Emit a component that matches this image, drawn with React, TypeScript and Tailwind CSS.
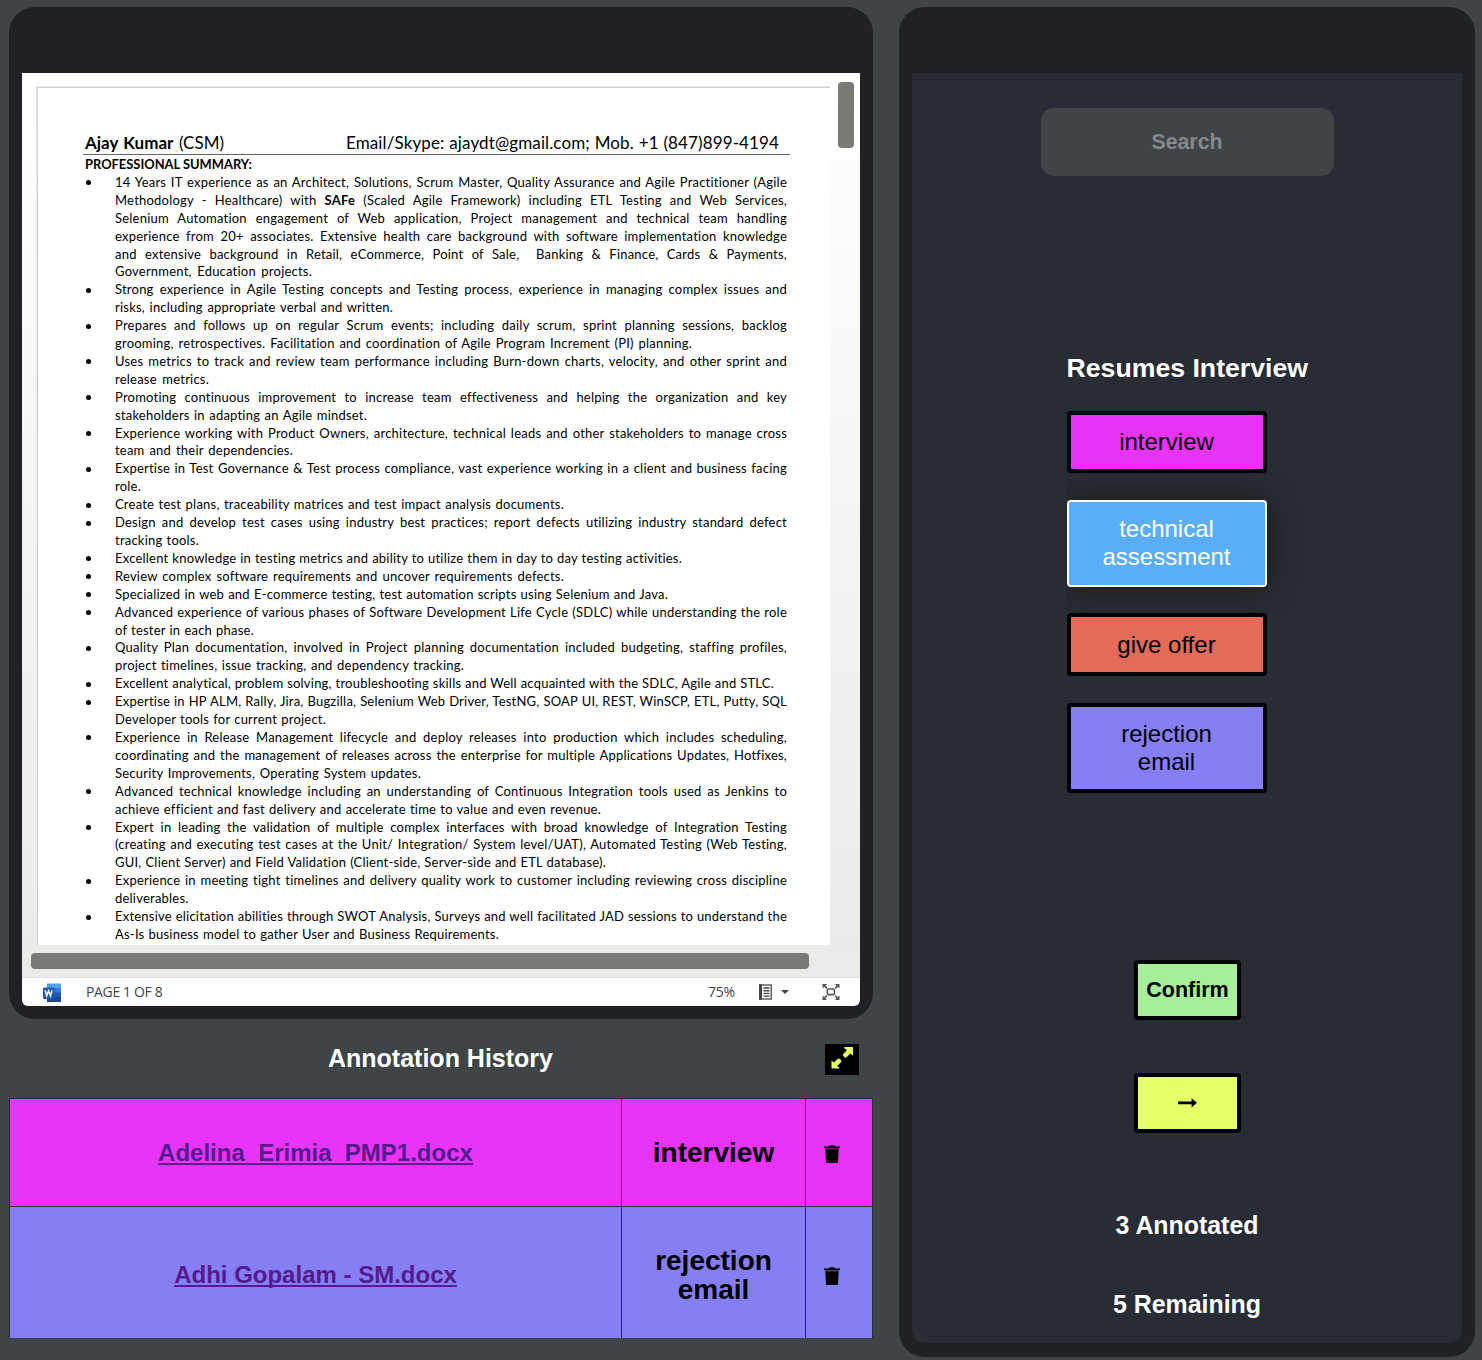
import React from "react";

type Line = { text: React.ReactNode; width?: number; bullet?: boolean };

const lines: Line[] = [
  { text: "14 Years IT experience as an Architect, Solutions, Scrum Master, Quality Assurance and Agile Practitioner (Agile", bullet: true },
  { text: <>Methodology - Healthcare) with <b>SAFe</b> (Scaled Agile Framework) including ETL Testing and Web Services,</> },
  { text: "Selenium Automation engagement of Web application, Project management and technical team handling" },
  { text: "experience from 20+ associates. Extensive health care background with software implementation knowledge" },
  { text: "and extensive background in Retail, eCommerce, Point of Sale, \u00a0Banking & Finance, Cards & Payments," },
  { text: "Government, Education projects.", width: 197 },
  { text: "Strong experience in Agile Testing concepts and Testing process, experience in managing complex issues and", bullet: true },
  { text: "risks, including appropriate verbal and written.", width: 278 },
  { text: "Prepares and follows up on regular Scrum events; including daily scrum, sprint planning sessions, backlog", bullet: true },
  { text: "grooming, retrospectives. Facilitation and coordination of Agile Program Increment (PI) planning.", width: 577 },
  { text: "Uses metrics to track and review team performance including Burn-down charts, velocity, and other sprint and", bullet: true },
  { text: "release metrics.", width: 94 },
  { text: "Promoting continuous improvement to increase team effectiveness and helping the organization and key", bullet: true },
  { text: "stakeholders in adapting an Agile mindset.", width: 252 },
  { text: "Experience working with Product Owners, architecture, technical leads and other stakeholders to manage cross", bullet: true },
  { text: "team and their dependencies.", width: 178 },
  { text: "Expertise in Test Governance & Test process compliance, vast experience working in a client and business facing", bullet: true },
  { text: "role.", width: 26 },
  { text: "Create test plans, traceability matrices and test impact analysis documents.", width: 449, bullet: true },
  { text: "Design and develop test cases using industry best practices; report defects utilizing industry standard defect", bullet: true },
  { text: "tracking tools.", width: 84 },
  { text: "Excellent knowledge in testing metrics and ability to utilize them in day to day testing activities.", width: 567, bullet: true },
  { text: "Review complex software requirements and uncover requirements defects.", width: 449, bullet: true },
  { text: "Specialized in web and E-commerce testing, test automation scripts using Selenium and Java.", width: 553, bullet: true },
  { text: "Advanced experience of various phases of Software Development Life Cycle (SDLC) while understanding the role", bullet: true },
  { text: "of tester in each phase.", width: 139 },
  { text: "Quality Plan documentation, involved in Project planning documentation included budgeting, staffing profiles,", bullet: true },
  { text: "project timelines, issue tracking, and dependency tracking.", width: 349 },
  { text: "Excellent analytical, problem solving, troubleshooting skills and Well acquainted with the SDLC, Agile and STLC.", width: 659, bullet: true },
  { text: "Expertise in HP ALM, Rally, Jira, Bugzilla, Selenium Web Driver, TestNG, SOAP UI, REST, WinSCP, ETL, Putty, SQL", bullet: true },
  { text: "Developer tools for current project.", width: 211 },
  { text: "Experience in Release Management lifecycle and deploy releases into production which includes scheduling,", bullet: true },
  { text: "coordinating and the management of releases across the enterprise for multiple Applications Updates, Hotfixes," },
  { text: "Security Improvements, Operating System updates.", width: 306 },
  { text: "Advanced technical knowledge including an understanding of Continuous Integration tools used as Jenkins to", bullet: true },
  { text: "achieve efficient and fast delivery and accelerate time to value and even revenue.", width: 486 },
  { text: "Expert in leading the validation of multiple complex interfaces with broad knowledge of Integration Testing", bullet: true },
  { text: "(creating and executing test cases at the Unit/ Integration/ System level/UAT), Automated Testing (Web Testing," },
  { text: "GUI, Client Server) and Field Validation (Client-side, Server-side and ETL database).", width: 491 },
  { text: "Experience in meeting tight timelines and delivery quality work to customer including reviewing cross discipline", bullet: true },
  { text: "deliverables.", width: 102 },
  { text: "Extensive elicitation abilities through SWOT Analysis, Surveys and well facilitated JAD sessions to understand the", bullet: true },
  { text: "As-Is business model to gather User and Business Requirements.", width: 384 },
];

function TrashIcon() {
  return (
    <svg width="16" height="18" viewBox="0 0 16 18">
      <path d="M0 1.4h4.6L6 .2h4l1.4 1.2H16v1.5H0z" fill="#000" />
      <path d="M1 2.9h14v2H1z" fill="#000" fillOpacity="0.55" />
      <path d="M1.3 4.6h13.4l-.7 12.2q-.1 1.2-1.3 1.2H3.3q-1.2 0-1.3-1.2z" fill="#000" />
    </svg>
  );
}

function WordIcon() {
  return (
    <svg width="18" height="19" viewBox="0 0 18 19">
      <path d="M4 .5h14v5H4z" fill="#4fa3e8" />
      <path d="M4 5h14v5H4z" fill="#3a78d0" />
      <path d="M4 9.5h14v5H4z" fill="#2558b5" />
      <path d="M4 14h14v5H4z" fill="#1b4495" />
      <rect x="0" y="4.5" width="11.5" height="11.5" rx="1" fill="#2359b8" />
      <path d="M2.2 7.4l1.5 5.4 1.9-5 1.9 5 1.5-5.4" fill="none" stroke="#fff" strokeWidth="1.5" />
    </svg>
  );
}

function LayoutIcon() {
  return (
    <svg width="13" height="16" viewBox="0 0 13 16">
      <rect x=".75" y="1" width="11.5" height="14" fill="#fff" stroke="#555" strokeWidth="1.4" />
      <path d="M0 .4h3v15.2H0z" fill="#444" />
      <path d="M4.5 4h6M4.5 6.7h6M4.5 9.4h6M4.5 12.1h6" stroke="#444" strokeWidth="1.4" />
    </svg>
  );
}

function FitIcon() {
  return (
    <svg width="18" height="16" viewBox="0 0 18 16" fill="none" stroke="#555" strokeWidth="1.6">
      <rect x="5.4" y="5" width="7" height="5.6" rx="1" />
      <path d="M1.5 1.2L5 4.4M16.5 1.2L13 4.4M1.5 14.8L5 11.6M16.5 14.8L13 11.6" />
      <path d="M.5 0h4.6L.5 4.6zM17.5 0h-4.6l4.6 4.6zM.5 16h4.6L.5 11.4zM17.5 16h-4.6l4.6-4.6z" fill="#555" stroke="none" />
    </svg>
  );
}

function Viewer() {
  return (
    <div className="flex h-[933px] w-[838px] flex-col overflow-hidden rounded-b-md bg-white">
      <div className="flex h-[904px] flex-col bg-linear-to-b from-white to-[#ebeae8]">
        <div className="flex h-[872px] justify-between pl-[14px] pr-[6px]">
          <div className="mt-[13px] h-[859px] w-[794px] overflow-hidden border-l border-t border-[#ebebec] bg-white">
            <div className="h-full border-l border-t border-[#cfcfd2] pl-[45px] pt-[43px] font-[Lato,sans-serif] text-black [font-variant-ligatures:none]">
              <div className="flex h-[24px] w-[707px] items-center justify-between border-b border-[#666] pl-[2px] pr-[11px] text-[17px]">
                <div className="w-[139px] whitespace-nowrap [text-align-last:justify]">
                  <b>Ajay Kumar</b> (CSM)
                </div>
                <div className="w-[433px] tracking-[0.12px] whitespace-nowrap [text-align-last:justify]">
                  Email/Skype: ajaydt@gmail.com; Mob. +1 (847)899-4194
                </div>
              </div>
              <div className="ml-[2px] h-[18.9px] w-[166px] whitespace-nowrap text-[12.9px] leading-[18.4px] font-bold [text-align-last:justify]">
                PROFESSIONAL SUMMARY:
              </div>
              {lines.map((line, i) => (
                <div key={i} className="flex h-[17.92px] items-center pl-[3px] text-[13px] leading-[17.92px] tracking-[0.22px]">
                  <div className="w-[29px] shrink-0">
                    {line.bullet && <div className="size-[5px] rounded-full bg-black" />}
                  </div>
                  <div
                    className="shrink-0 whitespace-nowrap [text-align-last:justify]"
                    style={{ width: line.width ?? 672 }}
                  >
                    {line.text}
                  </div>
                </div>
              ))}
            </div>
          </div>
          <div className="mt-[9px] h-[66px] w-4 rounded bg-[#7a7976]" />
        </div>
        <div className="flex h-8 items-center bg-[#ecebe9] pl-[9px]">
          <div className="h-4 w-[778px] rounded bg-[#7a7976]" />
        </div>
      </div>
      <div className="flex h-[29px] items-center border-t border-[#e1e0de] pl-[21px] pr-5 font-['Open_Sans',sans-serif] text-[14px] text-[#444]">
        <WordIcon />
        <span className="ml-[25px] w-[78px] -translate-y-px whitespace-nowrap tracking-[-0.35px]">PAGE 1 OF 8</span>
        <span className="ml-auto w-[51px] -translate-y-px tracking-[-0.2px]">75%</span>
        <LayoutIcon />
        <div className="ml-[9px] mr-[33px] border-x-4 border-t-4 border-x-transparent border-t-[#444]" />
        <FitIcon />
      </div>
    </div>
  );
}

const labels = [
  { text: "interview", style: "mt-[28px] h-[62px] border-4 border-black bg-[#e933f8] text-black" },
  { text: "technical assessment", style: "mt-[27px] h-[87px] border-2 border-white bg-[#5aaef7] pb-[2px] text-white shadow-[0_0_26px_6px_rgba(31,31,31,0.9)]" },
  { text: "give offer", style: "relative mt-[26px] h-[63px] border-4 border-black bg-[#e46a59] text-black" },
  { text: "rejection email", style: "mt-[27px] h-[90px] border-4 border-black bg-[#857ef5] text-black" },
];

const history = [
  { file: "Adelina_Erimia_PMP1.docx", label: "interview", style: "h-[108px] bg-[#e933f8]", cell: "pt-0" },
  { file: "Adhi Gopalam - SM.docx", label: "rejection email", style: "h-[132px] bg-[#857ef5]", cell: "pt-[4px]" },
];

export default function App() {
  return (
    <div className="flex h-[1360px] w-[1482px] gap-[26px] overflow-hidden bg-[#3f4447] pl-[9px] pt-[7px] font-['Liberation_Sans',Arial,sans-serif]">
      <div className="w-[864px]">
        <div className="h-[1012px] rounded-[26px] bg-[#202125] px-[13px] pt-[66px]">
          <Viewer />
        </div>
        <div className="flex h-[79px] items-center pr-[14px]">
          <h2 className="ml-[319px] text-[25px] font-bold whitespace-nowrap text-white">Annotation History</h2>
          <button className="mt-[2px] ml-auto flex h-[31px] w-[34px] items-start justify-center bg-black pt-[3px]">
            <svg width="22" height="22" viewBox="0 0 22 22" fill="#e5ff66">
              <path d="M13.3 0H21.3Q22 0 22 .7V8.5L19.4 6.4L15.6 10.2Q14.4 11.2 13.2 10.1L12.4 9.3Q11.4 8.2 12.3 7L16 3L13.3 1.2z" />
              <path d="M.5 13.4L2.9 15.5L6.6 11.9Q7.8 11 8.9 12L9.9 12.9Q10.9 14 9.9 15.2L6.2 18.9L8.5 20.8V21.6H1.2Q.5 21.6 .5 20.9z" />
            </svg>
          </button>
        </div>
        <div>
          {history.map((row) => (
            <div key={row.file} className={`flex border-t border-l border-[#282c34] ${row.style}`}>
              <div className={`flex w-[612px] items-center justify-center border-r border-[#282c34] ${row.cell}`}>
                <a className="text-[24px] font-bold text-[#551a8b] underline [text-decoration-skip-ink:none]">{row.file}</a>
              </div>
              <div className={`flex w-[184px] items-center justify-center border-r border-[#282c34] px-4 text-center text-[28px] leading-[29px] font-bold text-black ${row.cell}`}>
                {row.label}
              </div>
              <div className={`flex w-[67px] items-center border-r border-[#282c34] pl-[18px] ${row.cell}`}>
                <div className="mt-[3px]">
                  <TrashIcon />
                </div>
              </div>
            </div>
          ))}
        </div>
      </div>

      <div className="h-[1350px] w-[576px] rounded-[26px] bg-[#202125] px-[13px] pt-[66px]">
        <div className="flex h-[1270px] flex-col items-center rounded-b-[13px] bg-[#282c34] pt-[35px]">
          <input
            className="h-[68px] w-[293px] rounded-[13px] bg-[#3f4447] text-center text-[21.3px] font-bold placeholder:text-[#84888b]"
            placeholder="Search"
          />
          <div className="mt-[177px] w-[241px] [clip-path:inset(0_-60px_0_0)]">
            <h2 className="h-[30px] text-[26.67px] leading-[30px] font-bold whitespace-nowrap text-white">Resumes Interview</h2>
            {labels.map((l) => (
              <button
                key={l.text}
                className={`flex w-[200px] items-center justify-center rounded px-7 text-center text-[24px] leading-7 ${l.style}`}
              >
                {l.text}
              </button>
            ))}
          </div>
          <button className="mt-[167px] flex h-[60px] w-[107px] items-center justify-center rounded border-4 border-black bg-[#a6ee99] pl-px text-[21.5px] font-bold text-black">
            Confirm
          </button>
          <button className="mt-[53px] flex h-[60px] w-[107px] items-center justify-center rounded border-4 border-black bg-[#e5ff66]">
            <svg width="19" height="10" viewBox="0 0 19 10">
              <path d="M0 3.4h13.6V.2L19 4.8l-5.4 4.7V6.2H0z" fill="#000" />
            </svg>
          </button>
          <div className="mt-[77px] text-[24.9px] leading-[30px] font-bold text-white">3 Annotated</div>
          <div className="mt-[49px] text-[24.9px] leading-[30px] font-bold text-white">5 Remaining</div>
        </div>
      </div>
    </div>
  );
}
